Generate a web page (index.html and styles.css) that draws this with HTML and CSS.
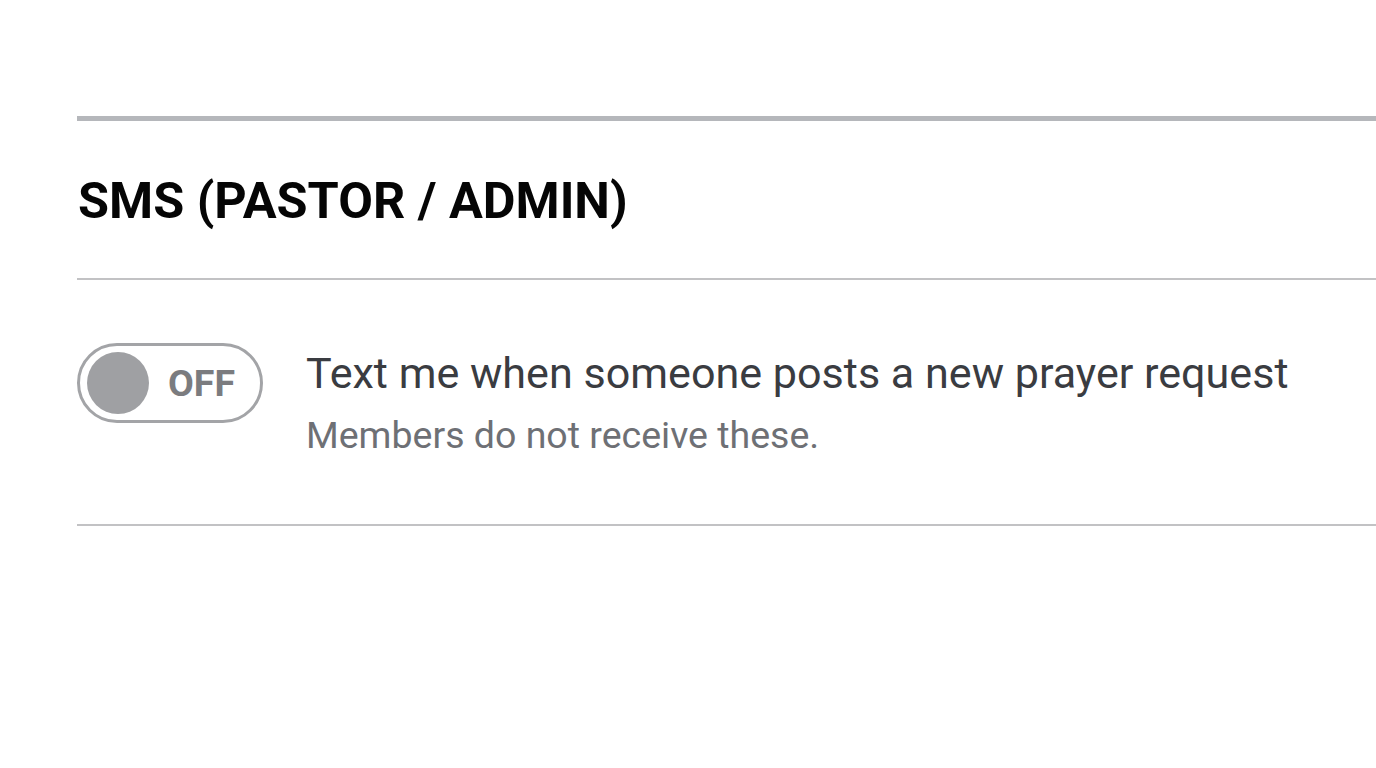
FILE: index.html
```html
<!DOCTYPE html>
<html>
<head>
<meta charset="utf-8">
<link rel="stylesheet" href="styles.css">
</head>
<body>
<main class="page">
  <section class="section">
    <header class="section-head">
      <h2 class="section-title">SMS (PASTOR / ADMIN)</h2>
    </header>
    <div class="setting-row">
      <button class="toggle" type="button" aria-pressed="false">
        <span class="knob"></span>
        <span class="toggle-label">OFF</span>
      </button>
      <div class="setting-text">
        <div class="setting-title">Text me when someone posts a new prayer request</div>
        <div class="setting-desc">Members do not receive these.</div>
      </div>
    </div>
  </section>
</main>
</body>
</html>
```

FILE: styles.css
```css
html, body {
  margin: 0;
  padding: 0;
  background: #ffffff;
}

body {
  font-family: Roboto, "Liberation Sans", Arial, sans-serif;
}

.page {
  padding: 116px 0 0 77px;
}

.section {
  border-top: 5px solid #b5b7bb;
}

.section-head {
  box-sizing: border-box;
  height: 159px;
  display: flex;
  align-items: center;
  padding-top: 3px;
  border-bottom: 2px solid #c2c2c4;
}

.section-title {
  margin: 0 0 0 1px;
  font-size: 50.4px;
  line-height: 60px;
  font-weight: 700;
  color: #050505;
}

.setting-row {
  box-sizing: border-box;
  height: 246px;
  display: flex;
  align-items: flex-start;
  padding-top: 63px;
  gap: 43px;
  border-bottom: 2px solid #c2c2c4;
}

.toggle {
  box-sizing: border-box;
  width: 186px;
  height: 80px;
  border: 3px solid #a3a4a7;
  border-radius: 40px;
  background: #ffffff;
  display: flex;
  align-items: center;
  padding: 0 0 0 7px;
  gap: 19px;
  margin: 0;
  cursor: pointer;
  flex: none;
}

.knob {
  width: 62px;
  height: 62px;
  border-radius: 50%;
  background: #9fa0a3;
  flex: none;
}

.toggle-label {
  font-family: Roboto, "Liberation Sans", Arial, sans-serif;
  font-size: 37.5px;
  line-height: 44px;
  font-weight: 700;
  color: #7b7c7f;
}

.setting-text {
  display: flex;
  flex-direction: column;
  margin-top: 5px;
}

.setting-title {
  font-size: 43.1px;
  line-height: 52px;
  color: #3a3c41;
}

.setting-desc {
  font-size: 37.5px;
  line-height: 44px;
  color: #6e7075;
  margin-top: 13px;
}
```
